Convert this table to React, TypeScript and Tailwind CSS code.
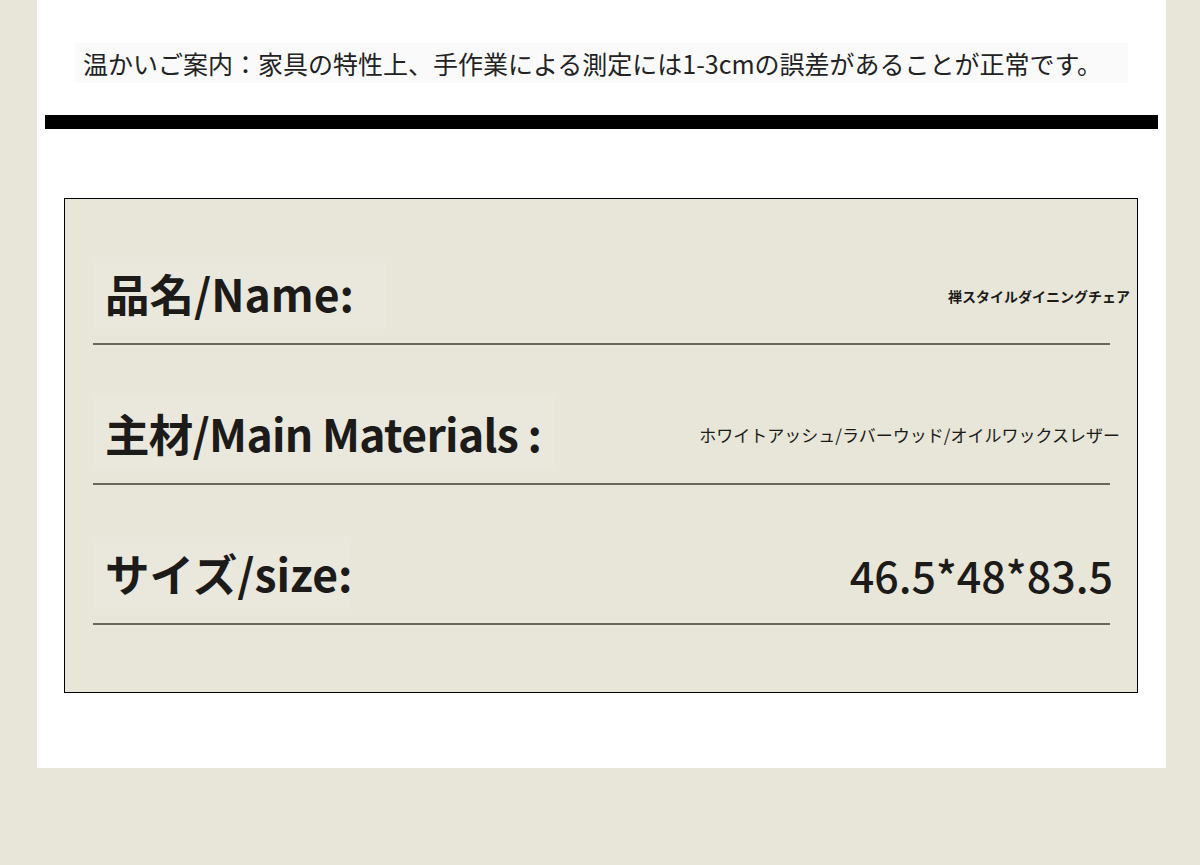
import React from "react";

const rows = [
  {
    label: "品名/Name:",
    labelClass: "",
    value: "禅スタイルダイニングチェア",
    valueClass: "text-[14px] font-bold -mr-[20px]",
    labelBox: "w-[292px]",
  },
  {
    label: "主材/Main Materials :",
    labelClass: "tracking-[-0.7px]",
    value: "ホワイトアッシュ/ラバーウッド/オイルワックスレザー",
    valueClass: "text-[17px] font-normal -mr-[10px] mb-[3px]",
    labelBox: "w-[462px]",
  },
  {
    label: "サイズ/size:",
    labelClass: "",
    value: "46.5*48*83.5",
    valueClass: "text-[43px] font-medium -mr-[3px] mb-[4px]",
    labelBox: "w-[256px]",
  },
];

export default function App() {
  return (
    <div
      className="min-h-[865px] w-full bg-[#e8e6d8] pl-[37px] pr-[34px] pb-[97px] text-[#1c1b19]"
      style={{ fontFamily: '"Noto Sans CJK JP", "Noto Sans", sans-serif' }}
    >
      <div className="flex h-[768px] flex-col bg-white">
        {/* notice */}
        <div className="mx-[38px] mt-[43px] flex h-[40px] items-center bg-[#fafafa] pl-[8px]">
          <p className="text-[25px] leading-none text-[#222]">
            温かいご案内：家具の特性上、手作業による測定には1-3cmの誤差があることが正常です。
          </p>
        </div>
        <div className="mx-[8px] mt-[32px] h-[14px] bg-black" />

        {/* spec table */}
        <div className="ml-[27px] mr-[28px] mt-[69px] border border-black bg-[#e8e6d8] pt-[50px] pb-[67px]">
          {rows.map((row, i) => (
            <div key={row.label} className={i > 0 ? "mt-[44px]" : ""}>
              <div className="ml-[28px] mr-[27px] flex h-[94px] items-center justify-between">
                <div className={`mb-[6px] flex h-[72px] items-center bg-[#eae8dd] pl-[12px] ${row.labelBox}`}>
                  <span className={`whitespace-nowrap text-[44.5px] font-bold leading-none ${row.labelClass}`}>
                    {row.label}
                  </span>
                </div>
                <span className={`whitespace-nowrap leading-none ${row.valueClass}`}>{row.value}</span>
              </div>
              <div className="ml-[28px] mr-[27px] h-[2px] bg-[#6b6758]" />
            </div>
          ))}
        </div>
      </div>
    </div>
  );
}
